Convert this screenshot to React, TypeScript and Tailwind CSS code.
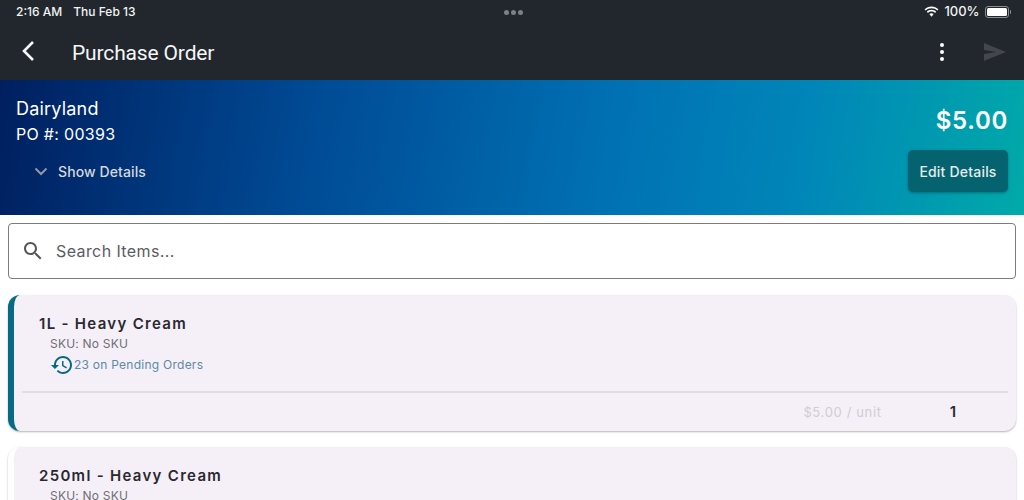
const font = { fontFamily: "Inter, sans-serif" };

function StatusBar() {
  return (
    <div className="flex h-6 items-center justify-between pl-4 pr-[13px] text-[12px] font-medium text-[#f2f3f3]">
      <div className="flex w-[300px] gap-[11px]">
        <span>2:16 AM</span>
        <span>Thu Feb 13</span>
      </div>
      <div className="flex gap-[2px]">
        <span className="size-[5px] rounded-full bg-[#7d8084]" />
        <span className="size-[5px] rounded-full bg-[#7d8084]" />
        <span className="size-[5px] rounded-full bg-[#7d8084]" />
      </div>
      <div className="flex w-[300px] items-center justify-end">
        <svg width="15" height="12" viewBox="0 0 15 12" className="mr-[5px]">
          <path d="M7.5 2.2c2.3 0 4.3.9 5.8 2.3l1.1-1.2C12.6 1.5 10.2.4 7.5.4S2.4 1.5.6 3.3l1.1 1.2C3.2 3.1 5.2 2.2 7.5 2.2z" fill="#fff" />
          <path d="M7.5 5.5c1.4 0 2.6.5 3.5 1.4l1.2-1.2C11 4.5 9.3 3.8 7.5 3.8s-3.5.7-4.7 1.9L4 6.9c.9-.9 2.1-1.4 3.5-1.4z" fill="#fff" />
          <path d="M7.5 7.2c-.9 0-1.6.3-2.2.9l2.2 2.6 2.2-2.6c-.6-.6-1.3-.9-2.2-.9z" fill="#fff" />
        </svg>
        <span className="text-[13px]">100%</span>
        <div className="ml-[5px] flex items-center">
          <div className="h-[12px] w-[24px] rounded-[3px] border border-[#8a8d90] p-[1px]">
            <div className="h-full w-full rounded-[1.5px] bg-white" />
          </div>
          <div className="ml-[1px] h-[4px] w-[1.5px] rounded-r-sm bg-[#8a8d90]" />
        </div>
      </div>
    </div>
  );
}

function NavBar() {
  return (
    <div className="flex h-14 items-center pl-[20px] pr-[18px] text-white">
      <svg width="16" height="22" viewBox="0 0 16 22" className="mb-[2px]">
        <path d="M13 2 L4 11 L13 20" fill="none" stroke="#f5f6f6" strokeWidth="2.6" />
      </svg>
      <h1 className="ml-9 mt-[3px] text-[21px] tracking-[-0.15px] text-[#f5f6f6]" style={{ fontFamily: "Roboto, sans-serif" }}>
        Purchase Order
      </h1>
      <div className="ml-auto flex items-center gap-[40px]">
        <div className="flex flex-col gap-[3px]">
          <span className="size-[4px] rounded-full bg-white" />
          <span className="size-[4px] rounded-full bg-white" />
          <span className="size-[4px] rounded-full bg-white" />
        </div>
        <svg width="22" height="18" viewBox="0 0 22 18">
          <path d="M0 0 L22 9 L0 18 L0 11 L12 9 L0 7 Z" fill="#43464b" />
        </svg>
      </div>
    </div>
  );
}

function Banner() {
  return (
    <div className="flex h-[135px] shrink-0 justify-between bg-[linear-gradient(100deg,#001f5f_0%,#004a94_30%,#0072b4_60%,#0086b8_78%,#00aaa9_100%)] pl-4 pr-4 pt-[18px]">
      <div className="text-white">
        <div className="text-[18px] leading-[22px] tracking-[0.2px]">Dairyland</div>
        <div className="mt-[3px] text-[16px] leading-[22px] tracking-[0.3px]">PO #: 00393</div>
        <div className="ml-[18px] mt-[16px] flex items-center gap-[10px] text-[14px] font-medium tracking-[0.1px] text-[#d5d8dd]">
          <svg width="14" height="9" viewBox="0 0 14 9">
            <path d="M1.5 1.5 L7 7 L12.5 1.5" fill="none" stroke="#8f98a4" strokeWidth="2" />
          </svg>
          <span>Show Details</span>
        </div>
      </div>
      <div className="flex flex-col items-end">
        <div className="mt-[9px] text-[24px] font-semibold leading-7 tracking-[0.7px] text-white">$5.00</div>
        <button className="mt-[15px] h-[42px] w-[100px] rounded-[5px] bg-[#04636f] text-[14px] font-medium tracking-[0.2px] text-[#e6ecec] shadow-[0_1px_3px_rgba(0,0,0,0.3)]">
          Edit Details
        </button>
      </div>
    </div>
  );
}

function SearchBox() {
  return (
    <div className="flex h-14 shrink-0 items-center rounded-[4px] border border-[#7b7b80] bg-white pl-[12px]">
      <svg width="24" height="24" viewBox="0 0 24 24" fill="#55555a">
        <path d="M15.5 14h-.79l-.28-.27C15.41 12.59 16 11.11 16 9.5 16 5.91 13.09 3 9.5 3S3 5.91 3 9.5 5.91 16 9.5 16c1.61 0 3.09-.59 4.23-1.57l.27.28v.79l5 4.99L20.49 19l-4.99-5zm-6 0C7.01 14 5 11.99 5 9.5S7.01 5 9.5 5 14 7.01 14 9.5 11.99 14 9.5 14z" />
      </svg>
      <span className="ml-[11px] text-[16px] tracking-[0.4px] text-[#5c5c62]">Search Items...</span>
    </div>
  );
}

function ItemCard({ name, accent, count }: { name: string; accent: boolean; count: number }) {
  return (
    <div className={`h-[136px] shrink-0 rounded-[12px] border-l-[6px] bg-[#f5f0f8] shadow-[0_1px_2px_rgba(0,0,0,0.3)] ${accent ? "border-[#066a84]" : "border-white"}`}>
      <div className="flex h-full flex-col pt-[19px]">
        <div className="ml-[25px] text-[15px] font-semibold leading-[20px] tracking-[1.3px] text-[#2b2930]">{name}</div>
        <div className="ml-[36px] mt-[2px] text-[12px] leading-[16px] tracking-[0.2px] text-[#706e74]">SKU: No SKU</div>
        <div className="ml-[37px] mt-[1px] flex items-center text-[12px] tracking-[0.25px] text-[#5d88a6]">
          <svg width="24" height="24" viewBox="0 0 24 24" fill="#066a84" className="-ml-[1px]">
            <path d="M13 3c-4.97 0-9 4.03-9 9H1l3.89 3.89.07.14L9 12H6c0-3.87 3.13-7 7-7s7 3.13 7 7-3.13 7-7 7c-1.93 0-3.68-.79-4.94-2.06l-1.42 1.42C8.27 19.99 10.51 21 13 21c4.97 0 9-4.03 9-9s-4.03-9-9-9zm-1 5v5l4.28 2.54.72-1.21-3.5-2.08V8H12z" />
          </svg>
          <span>{count} on Pending Orders</span>
        </div>
        <div className="ml-2 mr-2 mt-[14px] h-[2px] bg-[#e2dde5]" />
        <div className="mt-[8px] flex items-center justify-end pr-[60px]">
          <span className="text-[13px] tracking-[0.65px] text-[#cfcdd3]">$5.00 / unit</span>
          <span className="ml-[68px] text-[15px] font-semibold text-[#2b2930]">1</span>
        </div>
      </div>
    </div>
  );
}

export default function App() {
  return (
    <div className="flex h-[500px] w-[1024px] flex-col overflow-hidden bg-white" style={font}>
      <div className="shrink-0 bg-[#21272d]">
        <StatusBar />
        <NavBar />
      </div>
      <Banner />
      <div className="flex flex-col gap-4 px-2 pt-2">
        <SearchBox />
        <ItemCard name="1L - Heavy Cream" accent count={23} />
        <ItemCard name="250ml - Heavy Cream" accent={false} count={23} />
      </div>
    </div>
  );
}
